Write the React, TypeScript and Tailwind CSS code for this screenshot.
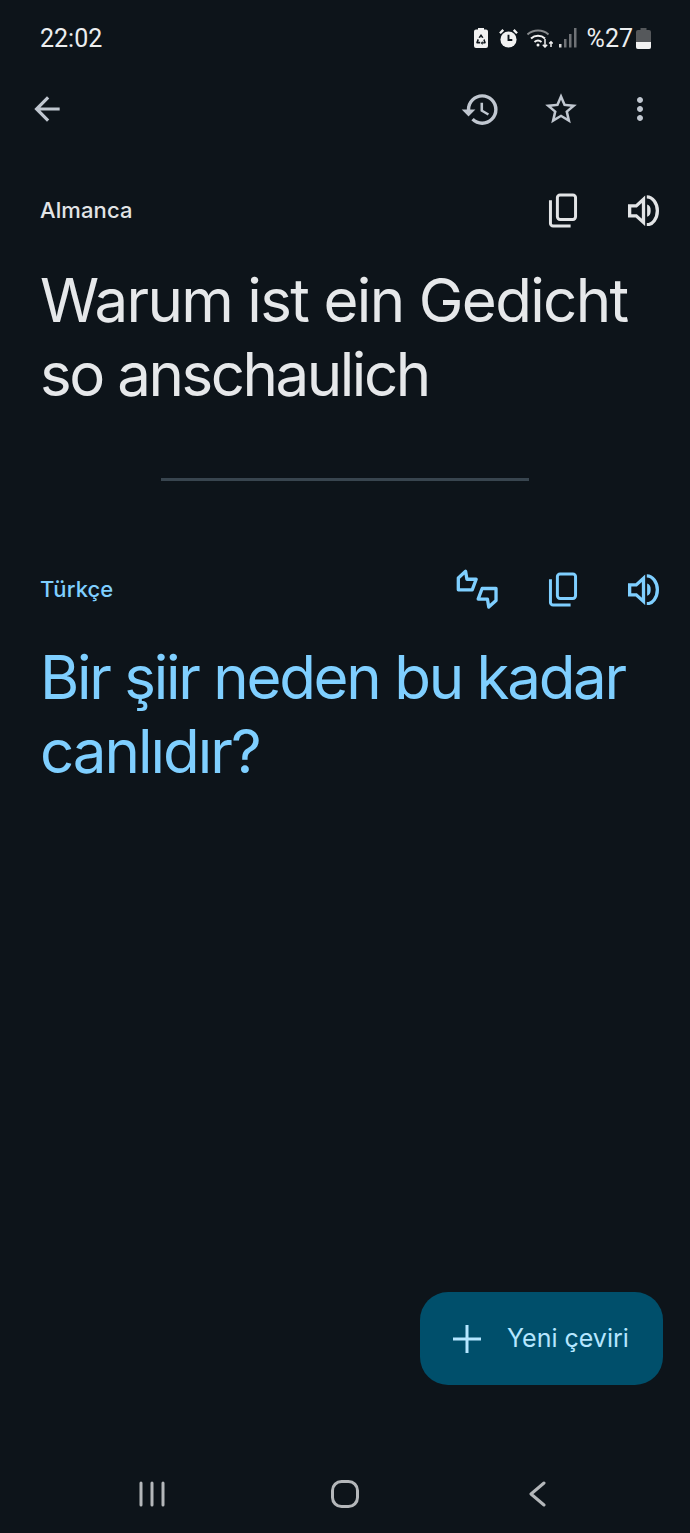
import React from 'react';
import { MdArrowBack, MdHistory, MdStarBorder, MdMoreVert } from 'react-icons/md';

const CopyIcon = ({ className }: { className?: string }) => (
  <svg viewBox="52 38 90 106" className={className} fill="none" stroke="currentColor" strokeWidth="9">
    <rect x="80" y="44" width="55" height="74" rx="8" />
    <path d="M59 60v70a8 8 0 0 0 8 8h53" />
  </svg>
);

const SpeakerIcon = ({ className }: { className?: string }) => (
  <svg viewBox="290 45 100 92" className={className} fill="none" stroke="currentColor">
    <path d="M298 77h20l22-20v70l-22-20h-20z" strokeWidth="10" />
    <path d="M351 73a14 19 0 0 1 0 37z" fill="currentColor" stroke="none" />
    <path d="M350 50a32 42 0 0 1 0 84" strokeWidth="10" />
  </svg>
);

const RateIcon = ({ className }: { className?: string }) => (
  <svg viewBox="45 40 130 122" className={className} fill="none" stroke="currentColor" strokeWidth="10" strokeLinejoin="round">
    <path d="M52 100V66l22-20 4 24h28l-12 32H52z" />
    <path d="M166 100v34l-22 20-4-24h-28l12-32h42z" />
  </svg>
);

function SectionHeader({ label, children, tone }: { label: string; children: React.ReactNode; tone: string }) {
  return (
    <div className={`flex items-center justify-between pl-[40px] pr-[30px] h-[40px] ${tone}`}>
      <span className="text-[22px] font-medium font-['Inter',sans-serif] tracking-[0.1px]">{label}</span>
      <div className="flex items-center">{children}</div>
    </div>
  );
}

export default function App() {
  return (
    <div className="relative flex flex-col h-[1533px] w-[690px] overflow-hidden bg-[#0d141a] font-['Roboto',sans-serif]">
      {/* status bar */}
      <div className="flex items-center justify-between h-[76px] pl-[40px] pr-[39px] text-[#eceef0]">
        <span className="text-[25px] leading-none">22:02</span>
        <div className="flex items-center">
          <svg viewBox="0 0 14 20" className="w-[14px] h-[20px] mr-[11px]">
            <path d="M4 0h6v1.500h2a2 2 0 0 1 2 2V18a2 2 0 0 1-2 2H2a2 2 0 0 1-2-2V3.500a2 2 0 0 1 2-2h2z" fill="#f2f2f2" />
            <path d="M7 6l2.500 3.500-1.500.5L7 8.500 6 10l-1.500-.5zM3.500 11l1.500.8-.8 2h2v1.700H3a1 1 0 0 1-.6-1.500zM10.500 11l1.100 3a1 1 0 0 1-.6 1.500H8.500v1.500L6.800 15l1.700-2v1.300h1.500L9.300 12z" fill="#0d141a" />
          </svg>
          <svg viewBox="0 0 20 20" className="w-[19px] h-[19px] mr-[9px]">
            <circle cx="10" cy="11" r="8.500" fill="#f2f2f2" />
            <path d="M10 6v5.500h4" fill="none" stroke="#0d141a" strokeWidth="2" />
            <path d="M1 4.500 4.500 1M19 4.500 15.500 1" stroke="#f2f2f2" strokeWidth="2.500" />
          </svg>
          <svg viewBox="0 0 26 20" className="w-[26px] h-[20px] mr-[6px]" fill="none">
            <path d="M0.500 6.500a16 16 0 0 1 21 0" stroke="#85888b" strokeWidth="2" />
            <path d="M4 10.500a10.500 10.500 0 0 1 14 0" stroke="#f2f2f2" strokeWidth="2" />
            <path d="M7.500 14a5.500 5.500 0 0 1 7 0" stroke="#f2f2f2" strokeWidth="2" />
            <circle cx="11" cy="17" r="1.500" fill="#f2f2f2" />
            <path d="M18 11v8M15.800 16.800l2.200 2.200 2.200-2.200M24 19v-5M22.200 15.500l1.800-1.800 1.800 1.800" stroke="#f2f2f2" strokeWidth="1.500" />
          </svg>
          <svg viewBox="0 0 18 20" className="w-[18px] h-[20px] mr-[10px]" fill="#6f7276">
            <rect x="0" y="16" width="2.500" height="3.500" fill="#d8d8d8" />
            <rect x="5" y="11" width="2.500" height="8.500" />
            <rect x="10" y="6" width="2.500" height="13.500" />
            <rect x="15" y="0" width="2.500" height="19.500" />
          </svg>
          <span className="text-[25px] leading-none">%27</span>
          <svg viewBox="0 0 15 21" className="w-[15px] h-[21px] ml-[3px]">
            <path d="M4.500 0h6v2H13a2 2 0 0 1 2 2v15a2 2 0 0 1-2 2H2a2 2 0 0 1-2-2V4a2 2 0 0 1 2-2h2.500z" fill="#55585b" />
            <path d="M0 14h15v5a2 2 0 0 1-2 2H2a2 2 0 0 1-2-2z" fill="#f2f2f2" />
          </svg>
        </div>
      </div>

      {/* toolbar */}
      <div className="flex items-center justify-between h-[66px] pl-[28px] pr-[32px] text-[#c0c7d0]">
        <MdArrowBack className="w-[38px] h-[38px]" />
        <div className="flex items-center">
          <MdHistory className="w-[41px] h-[41px] mr-[41px]" />
          <MdStarBorder className="w-[38px] h-[38px] mr-[42px]" />
          <MdMoreVert className="w-[36px] h-[36px]" />
        </div>
      </div>

      {/* source */}
      <div className="mt-[48px]">
        <SectionHeader label="Almanca" tone="text-[#e2e4e6]">
          <CopyIcon className="w-[30px] h-[35px] mr-[49px]" />
          <SpeakerIcon className="w-[33px] h-[31px]" />
        </SectionHeader>
      </div>
      <p className="mt-[33px] pl-[40px] text-[60px] leading-[74px] text-[#e6e8ea] font-['Inter',sans-serif]">
        <span className="block tracking-[-1.65px]">Warum ist ein Gedicht</span>
        <span className="block tracking-[-2.45px]">so anschaulich</span>
      </p>

      <div className="mt-[67px] mx-auto h-[3px] w-[368px] bg-[#38454f]" />

      {/* translation */}
      <div className="mt-[88px]">
        <SectionHeader label="Türkçe" tone="text-[#7fcfff]">
          <RateIcon className="w-[43px] h-[41px] mr-[49px]" />
          <CopyIcon className="w-[30px] h-[35px] mr-[49px]" />
          <SpeakerIcon className="w-[33px] h-[31px]" />
        </SectionHeader>
      </div>
      <p className="mt-[31px] pl-[40px] text-[60px] leading-[74px] text-[#7fcfff] font-['Inter',sans-serif]">
        <span className="block tracking-[-2.25px]">Bir şiir neden bu kadar</span>
        <span className="block tracking-[-2px]">canlıdır?</span>
      </p>

      {/* nav bar */}
      <div className="mt-auto flex items-center h-[78px] pl-[139px] text-[#b4b7ba]">
        <svg viewBox="0 0 26 26" className="w-[26px] h-[26px] mr-[166px]" stroke="currentColor" strokeWidth="3" strokeLinecap="round">
          <path d="M2 2v22M13 2v22M24 2v22" />
        </svg>
        <svg viewBox="0 0 28 28" className="w-[28px] h-[28px] mr-[170px]" fill="none" stroke="currentColor" strokeWidth="3">
          <rect x="1.500" y="1.500" width="25" height="25" rx="9" />
        </svg>
        <svg viewBox="0 0 17 26" className="w-[17px] h-[26px]" fill="none" stroke="currentColor" strokeWidth="3" strokeLinecap="round" strokeLinejoin="round">
          <path d="M15 2 2 13l13 11" />
        </svg>
      </div>

      {/* new translation button */}
      <button className="absolute left-[420px] top-[1292px] flex items-center w-[243px] h-[93px] rounded-[28px] bg-[#004f6b] pl-[33px] text-[#b5e6ff]">
        <svg viewBox="0 0 28 28" className="w-[28px] h-[28px]" stroke="currentColor" strokeWidth="3">
          <path d="M0 14h28M14 0v28" />
        </svg>
        <span className="ml-[26px] text-[25px] font-['Inter',sans-serif]">Yeni çeviri</span>
      </button>
    </div>
  );
}
